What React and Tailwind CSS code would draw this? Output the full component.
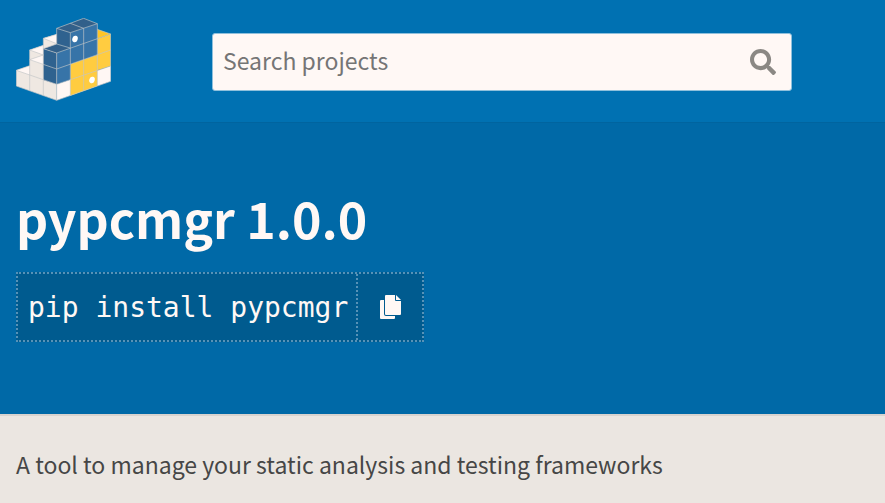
import { FaSearch } from "react-icons/fa";

const GRID_LINES =
  "M49 210L170 252M89 178L170 206M89 178L130 164L89 149M130 114L170 130M49 210V257L170 300L332 243V101L292 87M49 210L89 196M89 149V272M89 149L130 135M130 114V286M130 114L170 102M170 84V131L130 145L170 158L332 101M170 158V300M170 131L211 143M170 84L211 97L292 70V257M170 84L251 54L292 70M211 69L251 84V272M211 97V286M170 206L332 149M170 252L332 197";

function Logo() {
  return (
    <svg viewBox="48 53 285 249" className="h-[83px] w-[95px]" role="img" aria-label="PyPI">
      <path fill="#efe8e2" d="M49 210L89 196V149L130 135V114L170 102V300L49 257Z" />
      <path fill="#fff7f4" d="M49 210L89 196V224ZM89 149L130 135V164ZM89 178L130 164V193ZM130 114L170 102V130Z" />
      <path fill="#fff7f4" d="M170 252L332 197V243L170 300Z" />
      <path fill="#ffcc40" d="M211 191L332 149V197L292 210V257L211 286ZM292 115L332 101V149L292 163Z" />
      <path fill="#ffc526" d="M292 87L332 101L292 115Z" />
      <path fill="#3774a8" d="M170 158L211 143V97L292 70V163L211 191V238L170 252Z" />
      <path fill="#2f628f" d="M130 145L170 158V252L130 239ZM170 84L211 97V143L170 131Z" />
      <path fill="#32608a" d="M130 145L170 131L211 143L170 158ZM170 84L251 54L292 70L211 97Z" />
      <path fill="none" stroke="#c3c5c7" strokeOpacity="0.8" strokeWidth="2.5" strokeLinejoin="round" d={GRID_LINES} />
      <ellipse cx="225" cy="116" rx="8" ry="10" fill="#fff" transform="rotate(20 225 116)" />
      <ellipse cx="276" cy="239" rx="8" ry="10" fill="#fff" transform="rotate(20 276 239)" />
    </svg>
  );
}

function CopyIcon() {
  return (
    <svg viewBox="0 0 21 24" className="h-6 w-[21px]" fill="currentColor" aria-hidden="true">
      <path d="M0 6Q0 5 1 5H4V19Q4 21 6 21H15V23Q15 24 14 24H1Q0 24 0 23Z" />
      <path d="M6 0H15V5Q15 6 16 6H21V19Q21 20 20 20H6Q5 20 5 19V1Q5 0 6 0Z" />
      <path d="M16 0L21 5H16Z" />
    </svg>
  );
}

export default function App() {
  return (
    <div className="flex min-h-screen flex-col bg-[#ebe6e1] font-['Noto_Sans_CJK_SC',sans-serif] text-[#464646]">
      <header className="flex items-start gap-[101px] border-b border-[#00649f] bg-[#0071b2] px-4 pt-[18px] pb-[21px]">
        <a href="/" className="shrink-0">
          <Logo />
        </a>
        <form role="search" className="mt-[15px] flex h-[58px] max-w-[580px] flex-1 items-stretch rounded-[3px] border border-[#8fc0dc] bg-[#fff8f5]">
          <input
            type="text"
            aria-label="Search projects"
            placeholder="Search projects"
            className="min-w-0 flex-1 bg-transparent pb-1 pl-[10px] text-[23px] leading-9 outline-none placeholder:text-[#757575]"
          />
          <button type="submit" aria-label="Search" className="px-[15px] text-[#8b8884]">
            <FaSearch size={26} />
          </button>
        </form>
      </header>

      <section className="bg-[#0069a7] px-4 pt-[62px] pb-[72px] text-[#fff8f5]">
        <h1 className="text-[50px] leading-[64px] font-bold">pypcmgr 1.0.0</h1>
        <div className="mt-[23px] flex h-[70px] w-fit border-2 border-dotted border-[#5792b7] bg-[#005b8f]">
          <code className="flex items-center pt-0.5 pr-2 pl-[10px] font-['DejaVu_Sans_Mono',monospace] text-[28px] whitespace-pre">pip install pypcmgr</code>
          <button
            type="button"
            aria-label="Copy pip instructions"
            className="flex w-[66px] items-center justify-center border-l-2 border-dotted border-[#5792b7]"
          >
            <CopyIcon />
          </button>
        </div>
      </section>

      <main className="flex-1 border-t-2 border-[#d8d3cf] px-4 pt-[30px]">
        <p className="text-[23px] leading-9">A tool to manage your static analysis and testing frameworks</p>
      </main>
    </div>
  );
}
